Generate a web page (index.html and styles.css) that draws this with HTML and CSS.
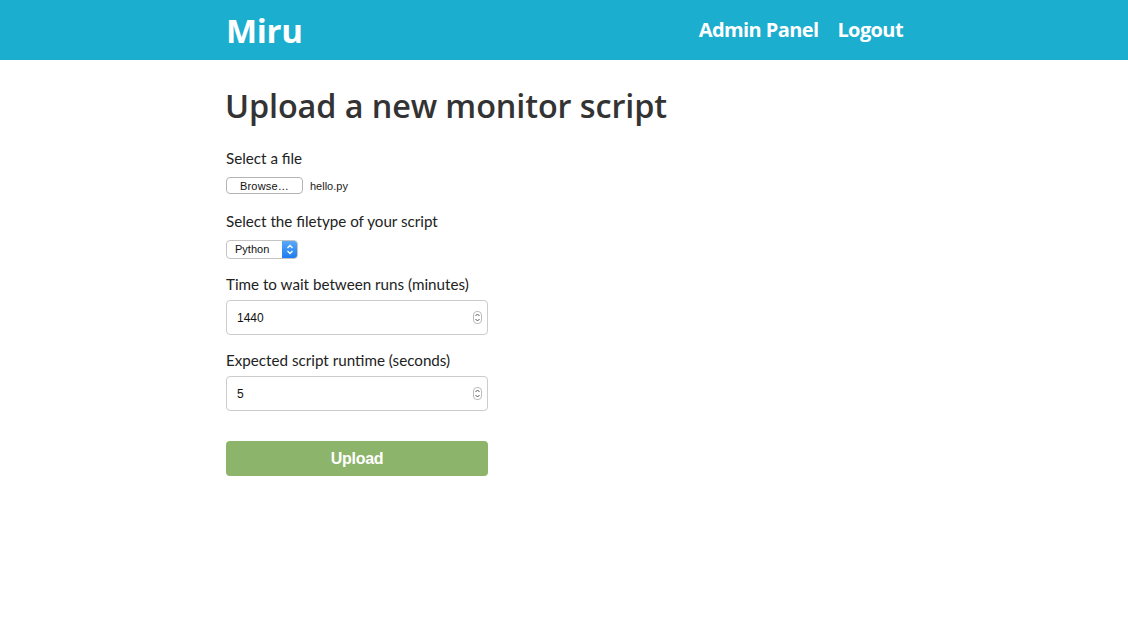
FILE: index.html
```html
<!DOCTYPE html>
<html>
<head>
<meta charset="utf-8">
<link rel="stylesheet" href="styles.css">
</head>
<body>
<header class="topbar">
  <div class="container bar-inner">
    <a class="brand">Miru</a>
    <nav class="nav">
      <a class="nav-link">Admin Panel</a>
      <a class="nav-link">Logout</a>
    </nav>
  </div>
</header>
<main class="container main">
  <h1 class="title">Upload a new monitor script</h1>
  <form class="form">
    <div class="field">
      <label class="label">Select a file</label>
      <div class="file-row">
        <span class="browse">Browse…</span>
        <span class="file-name">hello.py</span>
      </div>
    </div>
    <div class="field">
      <label class="label">Select the filetype of your script</label>
      <div class="select">
        <span class="select-text">Python</span>
        <span class="select-arrow">
          <svg width="8" height="11" viewBox="0 0 8 11"><path d="M1.5 4 L4 1.5 L6.5 4 M1.5 7 L4 9.5 L6.5 7" fill="none" stroke="#fff" stroke-width="1.3"/></svg>
        </span>
      </div>
    </div>
    <div class="field">
      <label class="label">Time to wait between runs (minutes)</label>
      <div class="input">
        <span class="input-val">1440</span>
        <span class="spin"><svg width="7" height="11" viewBox="0 0 7 11"><path d="M1.5 4 L3.5 2 L5.5 4 M1.5 7 L3.5 9 L5.5 7" fill="none" stroke="#555" stroke-width="1"/></svg></span>
      </div>
    </div>
    <div class="field">
      <label class="label">Expected script runtime (seconds)</label>
      <div class="input">
        <span class="input-val">5</span>
        <span class="spin"><svg width="7" height="11" viewBox="0 0 7 11"><path d="M1.5 4 L3.5 2 L5.5 4 M1.5 7 L3.5 9 L5.5 7" fill="none" stroke="#555" stroke-width="1"/></svg></span>
      </div>
    </div>
    <button type="button" class="upload">Upload</button>
  </form>
</main>
</body>
</html>
```

FILE: styles.css
```css
* { box-sizing: border-box; }
body {
  margin: 0;
  font-family: "Open Sans", sans-serif;
  color: #333;
  background: #fff;
}
.container {
  width: 678px;
  margin: 0 auto;
}
.topbar {
  background: #1caecf;
  height: 60px;
}
.bar-inner {
  display: flex;
  align-items: center;
  justify-content: space-between;
  height: 60px;
}
.brand {
  color: #fff;
  font-weight: 700;
  font-size: 33px;
  line-height: 1;
  margin-left: 1px;
  letter-spacing: -0.3px;
}
.nav {
  display: flex;
  gap: 19px;
  margin-top: -2px;
}
.nav-link {
  color: #fff;
  font-weight: 700;
  font-size: 20px;
  letter-spacing: -0.6px;
}
.main {
  padding-top: 24px;
}
.title {
  margin: 0;
  font-size: 32.4px;
  font-weight: 600;
  line-height: 42px;
  letter-spacing: -0.1px;
}
.form {
  margin-top: 22px;
  width: 262px;
  margin-left: 1px;
}
.field {
  display: flex;
  flex-direction: column;
  align-items: flex-start;
  margin-bottom: 15px;
}
.label {
  display: block;
  font-family: "Lato", sans-serif;
  font-size: 15.2px;
  line-height: 20px;
  margin-bottom: 6px;
  color: #222;
}
.file-row {
  display: flex;
  align-items: center;
  gap: 7px;
  margin: 3px 0 2px;
  font-family: "Liberation Sans", sans-serif;
  font-size: 11px;
}
.browse {
  display: inline-block;
  width: 77px;
  height: 17px;
  border: 1px solid #b4b4b4;
  border-radius: 4px;
  text-align: center;
  line-height: 16px;
  color: #111;
  background: #fff;
  letter-spacing: 0.2px;
}
.file-name { color: #222; }
.select {
  display: flex;
  width: 72px;
  height: 19px;
  border: 1px solid #c4c4c4;
  border-radius: 4px;
  overflow: hidden;
  font-family: "Liberation Sans", sans-serif;
  font-size: 11px;
  margin: 3px 0 0;
}
.select-text {
  flex: 1;
  padding-left: 8px;
  line-height: 17px;
  color: #111;
}
.select-arrow {
  width: 15px;
  background: linear-gradient(#5aa8f8, #1d7cf0);
  display: flex;
  align-items: center;
  justify-content: center;
}
.input {
  display: flex;
  align-items: center;
  justify-content: space-between;
  align-self: stretch;
  height: 35px;
  border: 1px solid #ccc;
  border-radius: 4px;
  padding: 0 5px 0 10px;
  font-family: "Liberation Sans", sans-serif;
  font-size: 12px;
  color: #111;
}
.spin {
  display: flex;
  width: 9px;
  height: 13px;
  border: 1px solid #bbb;
  border-radius: 4px;
  align-items: center;
  justify-content: center;
}
.spin svg { width: 7px; height: 11px; }
.upload {
  display: block;
  width: 262px;
  height: 35px;
  margin-top: 30px;
  border: none;
  border-radius: 4px;
  background: #8db46b;
  color: #fff;
  font-family: "Liberation Sans", sans-serif;
  font-weight: 700;
  font-size: 16px;
  letter-spacing: -0.3px;
}
```
